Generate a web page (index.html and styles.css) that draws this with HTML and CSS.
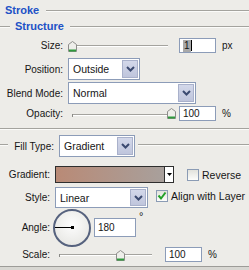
FILE: index.html
```html
<!DOCTYPE html>
<html lang="en">
<head>
  <meta charset="UTF-8" />
  <title>Stroke</title>
  <link rel="stylesheet" href="styles.css">
</head>
<body>
  <div class="panel">
    <div class="legend legend-top">
      <span class="title">Stroke</span>
      <span class="rule"></span>
    </div>
    <div class="legend legend-sub">
      <span class="lead"></span>
      <span class="title">Structure</span>
      <span class="rule"></span>
    </div>

    <div class="row r-size">
      <span class="lbl">Size:</span>
      <div class="slider s-size">
        <span class="track"></span>
        <svg class="thumb" style="left:0px" width="9" height="11" viewBox="0 0 9 11"><path d="M0.5 3.5 L4.5 0.5 L8.5 3.5 V10.5 H0.5 Z" fill="#eeeeea" stroke="#8d8d8a"/><path d="M1 9.5 H8" stroke="#2e9a3c" stroke-width="2"/></svg>
      </div>
      <div class="field f-size"><span class="sel">1</span><span class="caret"></span></div>
      <span class="unit">px</span>
    </div>

    <div class="row r-select r-position">
      <span class="lbl">Position:</span>
      <div class="select w-position">
        <span class="val">Outside</span>
        <span class="btn"><svg width="9" height="6" viewBox="0 0 9 6"><path d="M1 1 L4.5 4.5 L8 1" stroke="#3b4a70" stroke-width="2" fill="none"/></svg></span>
      </div>
    </div>

    <div class="row r-select r-blend">
      <span class="lbl">Blend Mode:</span>
      <div class="select w-blend">
        <span class="val">Normal</span>
        <span class="btn"><svg width="9" height="6" viewBox="0 0 9 6"><path d="M1 1 L4.5 4.5 L8 1" stroke="#3b4a70" stroke-width="2" fill="none"/></svg></span>
      </div>
    </div>

    <div class="row r-opacity">
      <span class="lbl">Opacity:</span>
      <div class="slider s-opacity">
        <span class="track"></span>
        <span class="tick"></span>
        <svg class="thumb" style="left:95px" width="9" height="11" viewBox="0 0 9 11"><path d="M0.5 3.5 L4.5 0.5 L8.5 3.5 V10.5 H0.5 Z" fill="#eeeeea" stroke="#8d8d8a"/><path d="M1 9.5 H8" stroke="#2e9a3c" stroke-width="2"/></svg>
      </div>
      <div class="field f-opacity">100</div>
      <span class="unit">%</span>
    </div>

    <div class="separator"></div>

    <div class="lower">
      <div class="row r-select r-fill">
        <span class="lead"></span>
        <span class="lbl lbl-fill">Fill Type:</span>
        <div class="select w-fill">
          <span class="val">Gradient</span>
          <span class="btn"><svg width="9" height="6" viewBox="0 0 9 6"><path d="M1 1 L4.5 4.5 L8 1" stroke="#3b4a70" stroke-width="2" fill="none"/></svg></span>
        </div>
        <span class="rule"></span>
      </div>

      <div class="row r-gradient">
        <span class="lbl">Gradient:</span>
        <div class="swatch">
          <span class="ramp"></span>
          <span class="drop"><svg width="5" height="3" viewBox="0 0 5 3"><path d="M0 0 H5 L2.5 3 Z" fill="#000"/></svg></span>
        </div>
        <span class="check c-reverse"></span>
        <span class="check-text">Reverse</span>
      </div>

      <div class="row r-style">
        <span class="lbl">Style:</span>
        <div class="select w-style">
          <span class="val">Linear</span>
          <span class="btn"><svg width="9" height="6" viewBox="0 0 9 6"><path d="M1 1 L4.5 4.5 L8 1" stroke="#3b4a70" stroke-width="2" fill="none"/></svg></span>
        </div>
        <span class="check c-align"><svg width="10" height="10" viewBox="0 0 10 10"><path d="M1.5 4.5 L4 7.5 L8.5 1.5" stroke="#22a028" stroke-width="2" fill="none"/></svg></span>
        <span class="check-text t-align">Align with Layer</span>
      </div>

      <div class="row r-angle">
        <span class="lbl">Angle:</span>
        <div class="dial">
          <span class="hand"></span>
          <span class="pin"></span>
        </div>
        <div class="field f-angle">180</div>
        <span class="deg">°</span>
      </div>

      <div class="row r-scale">
        <span class="lbl">Scale:</span>
        <div class="slider s-scale">
          <span class="track"></span>
          <span class="tick"></span>
          <svg class="thumb" style="left:57px" width="9" height="11" viewBox="0 0 9 11"><path d="M0.5 3.5 L4.5 0.5 L8.5 3.5 V10.5 H0.5 Z" fill="#eeeeea" stroke="#8d8d8a"/><path d="M1 9.5 H8" stroke="#2e9a3c" stroke-width="2"/></svg>
        </div>
        <div class="field f-scale">100</div>
        <span class="unit">%</span>
      </div>
    </div>

    <div class="footer"></div>
  </div>
</body>
</html>
```

FILE: styles.css
```css
html, body {
  margin: 0;
  padding: 0;
  background-color: #edece8;
}
body {
  font-family: "Liberation Sans", Arial, sans-serif;
  font-size: 10px;
  color: #151515;
}
.panel {
  width: 249px;
  height: 270px;
  overflow: hidden;
}

/* group headings */
.legend {
  display: flex;
  align-items: flex-start;
}
.legend .title {
  color: #2151c6;
  font-weight: bold;
  font-size: 11px;
}
.rule {
  flex: 1;
  height: 1px;
  background-color: #a4a39e;
  border-bottom: 1px solid #fbfbf9;
}
.lead {
  height: 1px;
  background-color: #a4a39e;
  border-bottom: 1px solid #fbfbf9;
  flex: none;
}
.legend-top {
  height: 20px;
  line-height: 20px;
}
.legend-top .title {
  padding-left: 5px;
}
.legend-top .rule {
  margin: 10px 0 0 7px;
}
.legend-sub {
  height: 12px;
  line-height: 12px;
}
.legend-sub .lead {
  width: 10px;
  margin: 6px 5px 0 0;
}
.legend-sub .rule {
  margin: 6px 0 0 6px;
}

/* rows */
.row {
  display: flex;
  align-items: center;
}
.lbl {
  width: 63px;
  flex: none;
  text-align: right;
}
.lower .lbl {
  width: 50px;
}
.r-size { margin-top: 6px; height: 15px; }
.r-position { margin-top: 5px; }
.r-blend { margin-top: 2px; }
.r-opacity { margin-top: 2px; height: 15px; }
.r-select { height: 22px; }
.r-fill { margin-top: 5px; align-items: flex-start; }
.r-gradient { margin-top: 9px; height: 17px; }
.r-style { margin-top: 4px; height: 21px; align-items: flex-start; }
.r-angle { height: 39px; }
.r-scale { height: 15px; }

/* dropdowns */
.select {
  display: flex;
  height: 100%;
  box-sizing: border-box;
  border: 1px solid #8c9cb8;
  background-color: #fff;
  padding: 1px;
  margin-left: 5px;
  flex: none;
}
.select .val {
  flex: 1;
  padding-left: 3px;
  align-self: center;
  font-size: 10.5px;
}
.select .btn {
  width: 16px;
  box-sizing: border-box;
  background: linear-gradient(#d3d8ea, #bfc5dc);
  border: 1px solid #a9b1cb;
  display: flex;
  align-items: center;
  justify-content: center;
}
.w-position { width: 72px; }
.w-blend { width: 128px; }
.w-fill { width: 76px; height: 22px; }
.w-style { width: 93px; height: 21px; }

/* text fields */
.field {
  height: 15px;
  box-sizing: border-box;
  border: 1px solid #8c9cb8;
  background-color: #fff;
  padding-left: 3px;
  line-height: 13px;
  display: flex;
  align-items: center;
  flex: none;
}
.f-size { width: 37px; margin-left: 11px; }
.f-opacity { width: 37px; margin-left: 4px; }
.f-scale { width: 37px; margin-left: 9px; }
.f-angle { width: 42px; height: 19px; margin-left: 3px; }
.field .sel {
  background-color: #a9a9a9;
  padding: 0 1px;
  line-height: 12px;
}
.field .caret {
  width: 1px;
  height: 11px;
  background-color: #000;
}
.unit {
  margin-left: 6px;
}

/* sliders */
.slider {
  position: relative;
  height: 100%;
  flex: none;
}
.s-size { width: 100px; margin-left: 5px; }
.s-opacity { width: 103px; margin-left: 9px; }
.s-scale { width: 97px; margin-left: 9px; }
.track {
  position: absolute;
  left: 0;
  right: 4px;
  top: 7px;
  height: 1px;
  background-color: #a4a39e;
  border-bottom: 1px solid #fff;
}
.s-size .track { right: 0; }
.s-opacity .track { top: 8px; }
.tick {
  position: absolute;
  left: 0;
  top: 7px;
  width: 1px;
  height: 3px;
  background-color: #8a8a86;
}
.s-opacity .tick { top: 8px; }
.thumb {
  position: absolute;
  top: 3px;
}
.s-opacity .thumb { top: 2px; }

/* separator */
.separator {
  margin-top: 7px;
  height: 1px;
  background-color: #a4a39e;
  border-bottom: 1px solid #fbfbf9;
}

/* fill type */
.r-fill .lead {
  width: 8px;
  margin-top: 9px;
}
.r-fill .lbl-fill {
  width: 46px;
  align-self: center;
}
.r-fill .rule {
  margin: 9px 0 0 3px;
}

/* gradient swatch */
.swatch {
  display: flex;
  width: 119px;
  height: 100%;
  box-sizing: border-box;
  border: 1px solid #2e2e2e;
  margin-left: 5px;
  flex: none;
}
.swatch .ramp {
  flex: 1;
  background: linear-gradient(to right, #b98a76, #a8a09c);
}
.swatch .drop {
  width: 8px;
  border-left: 1px solid #2e2e2e;
  background-color: #fff;
  display: flex;
  align-items: center;
  justify-content: center;
}

/* checkboxes */
.check {
  width: 12px;
  height: 12px;
  box-sizing: border-box;
  border: 1px solid #8b9bb4;
  background: linear-gradient(#e2e2dc, #fdfdfb);
  display: flex;
  align-items: center;
  justify-content: center;
  flex: none;
}
.c-reverse { margin-left: 13px; }
.c-align { margin: 3px 0 0 8px; }
.check-text {
  margin-left: 3px;
  font-size: 10.5px;
}
.t-align {
  line-height: 18px;
}
.r-style .lbl {
  align-self: center;
}

/* angle dial */
.dial {
  position: relative;
  width: 38px;
  height: 38px;
  box-sizing: border-box;
  border: 2px solid #56627e;
  border-radius: 50%;
  background: radial-gradient(circle at 50% 40%, #fdfdfd, #e2e2de);
  margin-left: 3px;
  flex: none;
}
.dial .hand {
  position: absolute;
  left: 0;
  top: 16px;
  width: 17px;
  height: 1px;
  background-color: #000;
}
.dial .pin {
  position: absolute;
  left: 16px;
  top: 15px;
  width: 3px;
  height: 3px;
  background-color: #000;
}
.deg {
  align-self: flex-start;
  margin: 2px 0 0 3px;
  font-size: 11px;
}

.footer {
  margin-top: 4px;
  height: 1px;
  background-color: #9d9c98;
  border-bottom: 3px solid #d8d7d2;
}
```
